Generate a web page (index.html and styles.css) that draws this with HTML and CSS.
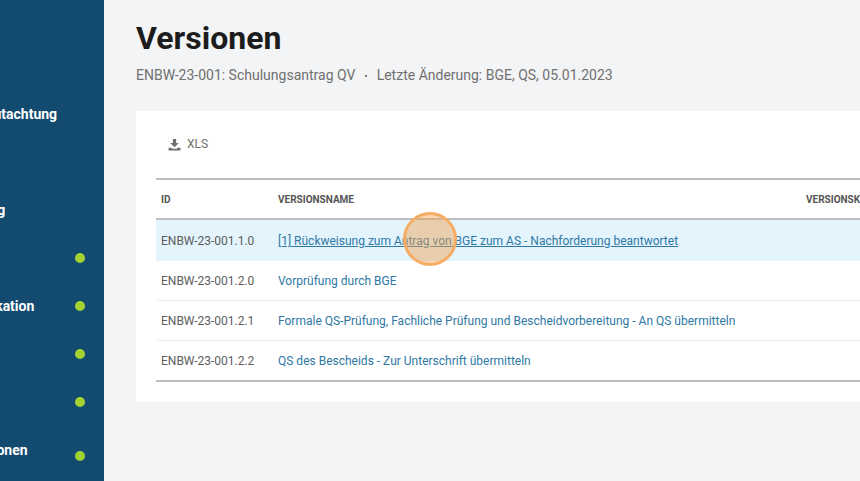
FILE: index.html
```html
<!DOCTYPE html>
<html lang="de">
<head>
    <meta charset="UTF-8">
    <meta name="viewport" content="width=device-width, initial-scale=1.0">
    <title>Versionen</title>
    <link rel="stylesheet" href="styles.css">
</head>
<body>
    <div class="page">
        <nav class="sidebar">
            <div class="nav-item nav-begutachtung">Begutachtung</div>
            <div class="nav-item"></div>
            <div class="nav-item nav-antrag">Antrag</div>
            <div class="nav-item"><span class="dot"></span></div>
            <div class="nav-item nav-publikation">Publikation<span class="dot"></span></div>
            <div class="nav-item"><span class="dot"></span></div>
            <div class="nav-item"><span class="dot"></span></div>
            <div class="nav-item nav-versionen">Versionen<span class="dot dot-low"></span></div>
        </nav>

        <main class="content">
            <h1>Versionen</h1>
            <p class="subtitle">ENBW-23-001: Schulungsantrag QV <span class="sep">•</span> Letzte Änderung: BGE, QS, 05.01.2023</p>

            <div class="card">
                <div class="toolbar">
                    <svg class="xls-icon" viewBox="0 0 24 24" width="13" height="13">
                        <path d="M9 2h6v7h5l-8 8-8-8h5z"/>
                        <path d="M1 18h5l2 2h8l2-2h5v5H1z"/>
                    </svg>
                    <span>XLS</span>
                </div>
                <table class="versions">
                    <thead>
                        <tr>
                            <th class="col-id">ID</th>
                            <th class="col-name">Versionsname</th>
                            <th class="col-comment">Versionskommentar</th>
                        </tr>
                    </thead>
                    <tbody>
                        <tr class="active">
                            <td>ENBW-23-001.1.0</td>
                            <td><a href="#">[1] Rückweisung zum Antrag von BGE zum AS - Nachforderung beantwortet</a></td>
                            <td></td>
                        </tr>
                        <tr>
                            <td>ENBW-23-001.2.0</td>
                            <td><a href="#">Vorprüfung durch BGE</a></td>
                            <td></td>
                        </tr>
                        <tr>
                            <td>ENBW-23-001.2.1</td>
                            <td><a href="#">Formale QS-Prüfung, Fachliche Prüfung und Bescheidvorbereitung - An QS übermitteln</a></td>
                            <td></td>
                        </tr>
                        <tr>
                            <td>ENBW-23-001.2.2</td>
                            <td><a href="#">QS des Bescheids - Zur Unterschrift übermitteln</a></td>
                            <td></td>
                        </tr>
                    </tbody>
                </table>
            </div>
        </main>
    </div>
    <div class="click-marker"></div>
</body>
</html>
```

FILE: styles.css
```css
html, body {
    margin: 0;
    padding: 0;
    height: 100%;
    overflow: hidden;
}
body {
    font-family: Roboto, "Liberation Sans", sans-serif;
    background-color: #f3f4f6;
    color: #333;
}
.page {
    display: flex;
    height: 481px;
}
.sidebar {
    flex: 0 0 104px;
    overflow: hidden;
    box-sizing: border-box;
    padding-top: 90px;
    background-color: #124a70;
}
.nav-item {
    position: relative;
    height: 48px;
    line-height: 48px;
    white-space: nowrap;
    font-size: 14px;
    font-weight: 700;
    color: #fff;
}
.nav-begutachtung {
    margin-left: -31px;
}
.nav-antrag {
    margin-left: -37px;
}
.nav-publikation {
    margin-left: -37px;
}
.nav-versionen {
    margin-left: -36px;
}
.dot {
    position: absolute;
    right: 19px;
    top: 19px;
    width: 10px;
    height: 10px;
    border-radius: 50%;
    background-color: #a4d233;
}
.dot-low {
    top: 25px;
}
.content {
    flex: 1;
    min-width: 0;
    overflow: hidden;
    padding-left: 32px;
}
h1 {
    margin: 19px 0 0;
    font-size: 32px;
    line-height: 38px;
    font-weight: 700;
    color: #1c1c1c;
}
.subtitle {
    margin: 8px 0 0;
    font-size: 14px;
    line-height: 20px;
    color: #707070;
}
.sep {
    margin: 0 5.5px;
    font-size: 10px;
}
.card {
    width: 800px;
    margin-top: 24px;
    padding: 21px 20px 20px;
    background-color: #fff;
}
.toolbar {
    display: flex;
    align-items: center;
    gap: 6px;
    height: 24px;
    margin-bottom: 22px;
    padding-left: 12px;
    font-size: 12px;
    color: #707070;
}
.xls-icon {
    fill: #6e6e6e;
}
.versions {
    width: 100%;
    table-layout: fixed;
    border-collapse: collapse;
    border-top: 2px solid #bdbdbd;
    border-bottom: 2px solid #bdbdbd;
    font-size: 12px;
}
.versions th {
    height: 38px;
    padding: 0 5px;
    text-align: left;
    font-size: 10px;
    font-weight: 700;
    text-transform: uppercase;
    color: #555;
    border-bottom: 2px solid #bdbdbd;
    white-space: nowrap;
}
.col-id {
    width: 107px;
}
.col-name {
    width: 518px;
}
.versions td {
    height: 39px;
    padding: 0 5px;
    color: #5c5c5c;
    border-bottom: 1px solid #eee;
    white-space: nowrap;
}
.versions tr:last-child td {
    border-bottom: 0;
}
.versions a {
    color: #2f78a4;
    text-decoration: none;
}
.active td {
    height: 41px;
    background-color: #e3f4fc;
    border-bottom: 0;
}
.active a {
    text-decoration: underline;
}
.click-marker {
    position: absolute;
    left: 403px;
    top: 212px;
    width: 48px;
    height: 48px;
    border: 3px solid #f6ac63;
    border-radius: 50%;
    background-color: rgba(240, 160, 80, 0.45);
}
```
